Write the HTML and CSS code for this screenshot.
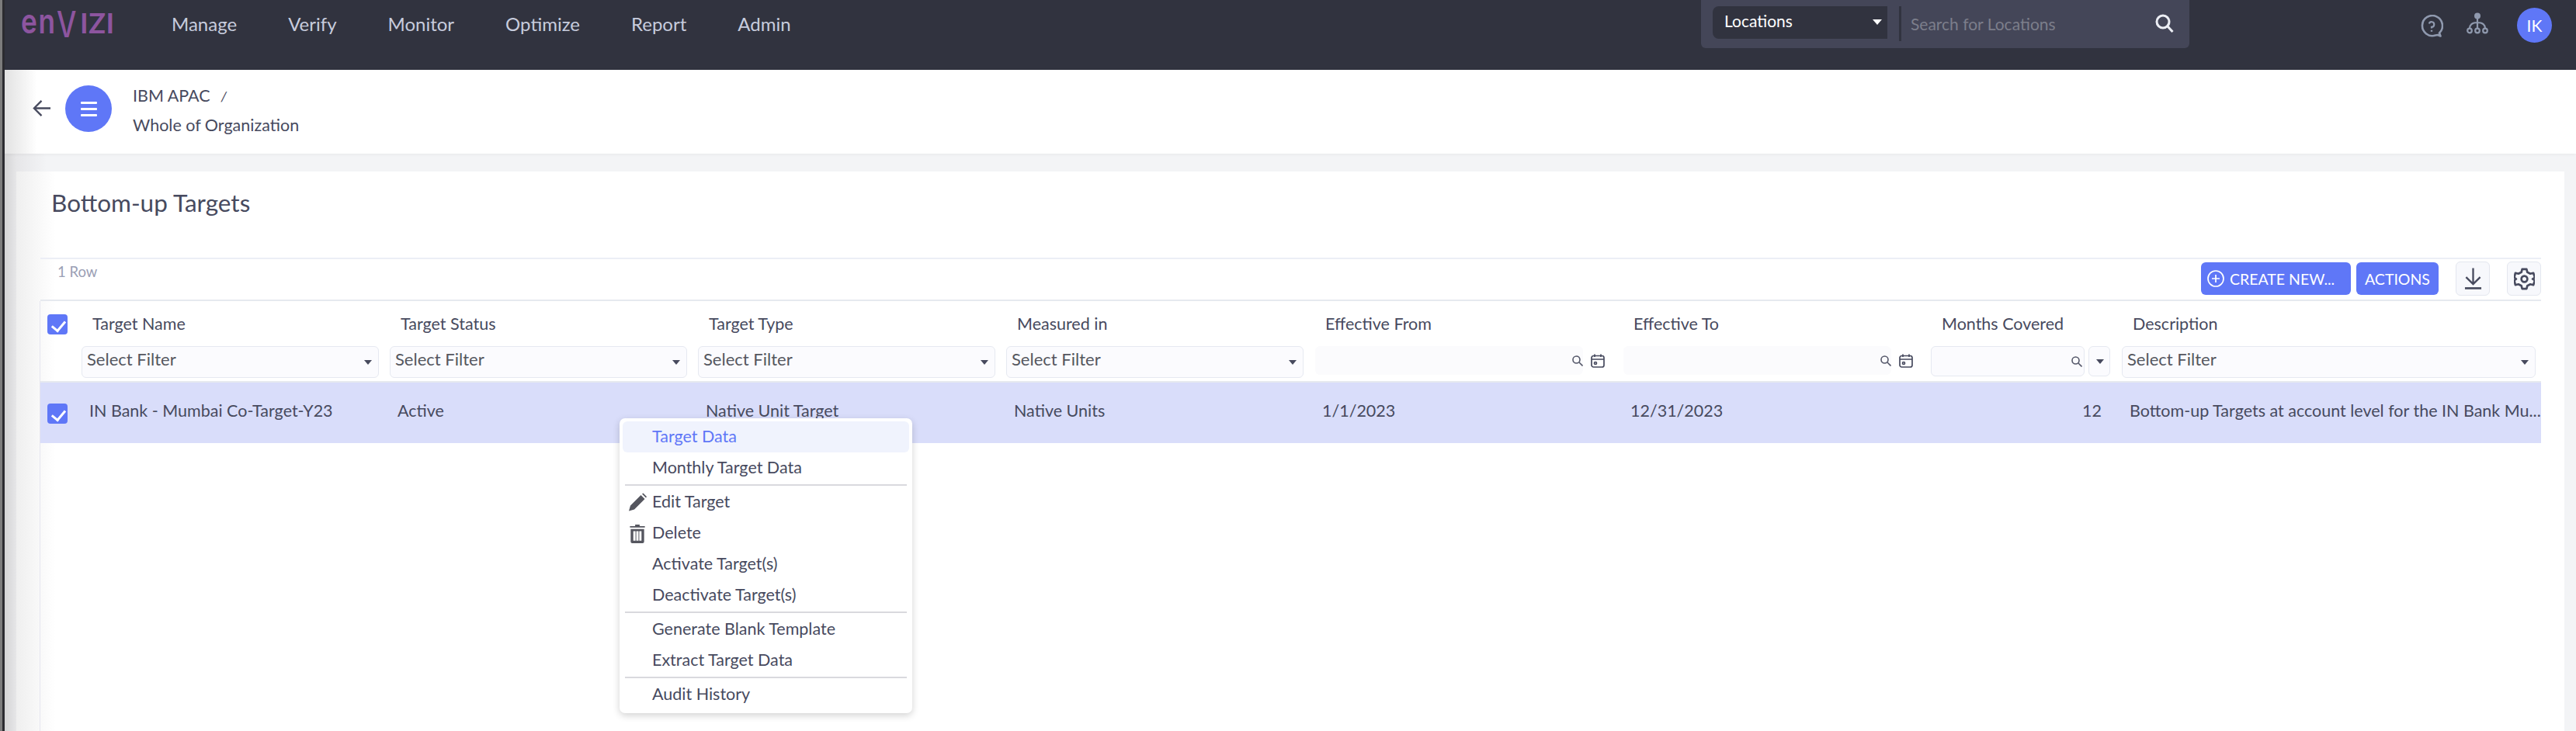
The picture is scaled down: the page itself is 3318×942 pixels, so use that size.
FILE: index.html
```html
<!DOCTYPE html>
<html lang="en">
<head>
    <meta charset="UTF-8">
    <title>Bottom-up Targets</title>
    <link rel="stylesheet" href="styles.css">
</head>
<body>
    <header class="topbar">
        <div class="logo"><span class="logo-en">en</span><span class="logo-v">V</span><span class="logo-izi">IZI</span></div>
        <nav class="main-nav">
            <a>Manage</a>
            <a>Verify</a>
            <a>Monitor</a>
            <a>Optimize</a>
            <a>Report</a>
            <a>Admin</a>
        </nav>
        <div class="search-box">
            <div class="search-select">Locations<span class="caret caret-white"></span></div>
            <div class="search-sep"></div>
            <div class="search-placeholder">Search for Locations</div>
            <svg class="search-icon" viewBox="0 0 24 24" fill="none" stroke="#eceef4" stroke-width="3">
                <circle cx="10" cy="10" r="8"/>
                <path d="M15.5 15.5 L22.5 23"/>
            </svg>
        </div>
        <div class="top-icons">
            <svg class="help-icon" viewBox="0 0 30 30" fill="none" stroke="#8f99ae" stroke-width="2.6">
                <path d="M25 23.500 A13 13 0 1 0 20 26.500 L23 26 L26.500 27.500 Z" stroke-linejoin="round"/>
                <path d="M11.800 11.500 A3.300 3.300 0 1 1 15 15.800 V17.500" stroke-width="2.200"/>
                <path d="M15 19.800 V21.800" stroke-width="2.400"/>
            </svg>
            <svg class="org-icon" viewBox="0 0 28 28" fill="none" stroke="#8f99ae" stroke-width="2.200">
                <circle cx="14" cy="4.500" r="4" fill="#8f99ae" stroke="none"/>
                <path d="M14 8 V21 M14 13 C7 13 4 16 4 20.500 M14 13 C21 13 24 16 24 20.500"/>
                <circle cx="4" cy="23.500" r="2.800"/>
                <circle cx="14" cy="23.500" r="2.800"/>
                <circle cx="24" cy="23.500" r="2.800"/>
            </svg>
            <div class="avatar">IK</div>
        </div>
    </header>

    <div class="page">
        <div class="breadcrumb-bar">
            <svg class="back-arrow" viewBox="0 0 24 24" fill="none" stroke="#474a5e" stroke-width="2.4">
                <path d="M12 2 L2 12 L12 22 M2 12 H24"/>
            </svg>
            <div class="round-btn"><span></span><span></span><span></span></div>
            <div class="crumbs">
                <div class="crumb-top">IBM APAC<i>/</i></div>
                <div class="crumb-bottom">Whole of Organization</div>
            </div>
        </div>

        <section class="card">
            <h1 class="title">Bottom-up Targets</h1>

            <div class="toolbar">
                <div class="row-count">1 Row</div>
                <div class="toolbar-actions">
                    <button class="btn btn-create">
                        <svg viewBox="0 0 22 22" fill="none" stroke="#fff" stroke-width="1.700">
                            <circle cx="11" cy="11" r="10"/>
                            <path d="M11 6 V16 M6 11 H16"/>
                        </svg>
                        CREATE NEW...
                    </button>
                    <button class="btn btn-actions">ACTIONS</button>
                    <button class="icon-btn btn-download">
                        <svg viewBox="0 0 24 30" fill="none" stroke="#474a5e" stroke-width="2.400">
                            <path d="M12 1 V22 M2.500 13 L12 22.500 L21.500 13"/>
                            <path d="M1 28 H23" stroke-width="2.800"/>
                        </svg>
                    </button>
                    <button class="icon-btn btn-gear">
                        <svg viewBox="0 0 28 30" fill="none" stroke="#474a5e" stroke-width="2.800" stroke-linejoin="round">
                            <path d="M11 2 H17 L18 6 L22 8 L26 7 L28 13 L25 15 L28 17 L26 23 L22 22 L18 24 L17 28 H11 L10 24 L6 22 L2 23 L0.500 17 L3 15 L0.500 13 L2 7 L6 8 L10 6 Z"/>
                            <circle cx="14" cy="15" r="4"/>
                        </svg>
                    </button>
                </div>
            </div>

            <div class="grid-table">
                <div class="tr tr-head">
                    <div class="cell-check"><span class="checkbox"></span></div>
                    <div class="th">Target Name</div>
                    <div class="th">Target Status</div>
                    <div class="th">Target Type</div>
                    <div class="th">Measured in</div>
                    <div class="th">Effective From</div>
                    <div class="th">Effective To</div>
                    <div class="th">Months Covered</div>
                    <div class="th">Description</div>
                </div>
                <div class="tr tr-filter">
                    <div></div>
                    <div class="flt"><div class="select-filter">Select Filter<span class="caret"></span></div></div>
                    <div class="flt"><div class="select-filter">Select Filter<span class="caret"></span></div></div>
                    <div class="flt"><div class="select-filter">Select Filter<span class="caret"></span></div></div>
                    <div class="flt"><div class="select-filter">Select Filter<span class="caret"></span></div></div>
                    <div class="flt flt-date">
                        <div class="date-input">
                            <svg class="mini-search" viewBox="0 0 14 14" fill="none" stroke="#55586a" stroke-width="1.600"><circle cx="5.500" cy="5.500" r="4.500"/><path d="M9 9 L13.500 13.500"/></svg>
                        </div>
                        <svg class="calendar" viewBox="0 0 18 18" fill="none" stroke="#474a5e" stroke-width="1.700"><rect x="1" y="2.500" width="16" height="14.500" rx="2.500"/><path d="M1 7 H17 M5 0.500 V4 M13 0.500 V4"/><circle cx="6" cy="12" r="1.500"/></svg>
                    </div>
                    <div class="flt flt-date">
                        <div class="date-input">
                            <svg class="mini-search" viewBox="0 0 14 14" fill="none" stroke="#55586a" stroke-width="1.600"><circle cx="5.500" cy="5.500" r="4.500"/><path d="M9 9 L13.500 13.500"/></svg>
                        </div>
                        <svg class="calendar" viewBox="0 0 18 18" fill="none" stroke="#474a5e" stroke-width="1.700"><rect x="1" y="2.500" width="16" height="14.500" rx="2.500"/><path d="M1 7 H17 M5 0.500 V4 M13 0.500 V4"/><circle cx="6" cy="12" r="1.500"/></svg>
                    </div>
                    <div class="flt flt-num">
                        <div class="num-input">
                            <svg class="mini-search" viewBox="0 0 14 14" fill="none" stroke="#55586a" stroke-width="1.600"><circle cx="5.500" cy="5.500" r="4.500"/><path d="M9 9 L13.500 13.500"/></svg>
                        </div>
                        <div class="num-op"><span class="caret"></span></div>
                    </div>
                    <div class="flt"><div class="select-filter">Select Filter<span class="caret"></span></div></div>
                </div>
                <div class="tr tr-row">
                    <div class="cell-check"><span class="checkbox"></span></div>
                    <div class="td">IN Bank - Mumbai Co-Target-Y23</div>
                    <div class="td">Active</div>
                    <div class="td">Native Unit Target</div>
                    <div class="td">Native Units</div>
                    <div class="td">1/1/2023</div>
                    <div class="td">12/31/2023</div>
                    <div class="td td-num">12</div>
                    <div class="td td-desc">Bottom-up Targets at account level for the IN Bank Mu...</div>

                    <ul class="context-menu">
                        <li class="active">Target Data</li>
                        <li>Monthly Target Data</li>
                        <li class="divider"></li>
                        <li>
                            <svg class="menu-icon" viewBox="0 0 24 24" fill="#55565f"><path d="M1 23 L3 16 L16.500 2.500 L21.500 7.500 L8 21 Z M18 1 L19.500 0 L24 4.500 L23 6 Z"/></svg>
                            Edit Target
                        </li>
                        <li>
                            <svg class="menu-icon" viewBox="0 0 24 26"><path fill="#55565f" d="M2 3 H9 V1 H15 V3 H22 V5 H2 Z M3 7 H21 V24 Q21 26 19 26 H5 Q3 26 3 24 Z"/><path fill="#fff" d="M6.500 10 H9.500 V22.500 H6.500 Z M10.500 10 H13.500 V22.500 H10.500 Z M14.500 10 H17.500 V22.500 H14.500 Z"/></svg>
                            Delete
                        </li>
                        <li>Activate Target(s)</li>
                        <li>Deactivate Target(s)</li>
                        <li class="divider"></li>
                        <li>Generate Blank Template</li>
                        <li>Extract Target Data</li>
                        <li class="divider"></li>
                        <li>Audit History</li>
                    </ul>
                </div>
            </div>
        </section>
    </div>
</body>
</html>
```

FILE: styles.css
```css
* {
    box-sizing: border-box;
}
html, body {
    height: 100%;
    overflow: hidden;
}
body {
    margin: 0;
    padding-left: 6px;
    background: linear-gradient(90deg, #d4d4d5 6px, #e6e6e8 21px, #f3f4f6 60px);
    font-family: Lato, "Noto Sans", sans-serif;
    font-size: 21.5px;
    color: #474a5e;
    position: relative;
}
body::before {
    content: "";
    position: absolute;
    left: 0;
    top: 0;
    bottom: 0;
    width: 6px;
    background: linear-gradient(90deg, #7c7c7c 50%, #2b2b30 50%);
}

/* top bar */
.topbar {
    height: 90px;
    background: #31333f;
    display: flex;
    align-items: flex-start;
    padding-left: 21px;
}
.logo {
    width: 194px;
    display: flex;
    align-items: flex-start;
    font-family: Inter, sans-serif;
    color: #8d559f;
}
.logo-en {
    display: inline-block;
    width: 46px;
    margin-top: 5px;
    font-size: 44px;
    font-weight: 600;
    line-height: 44px;
    letter-spacing: 2px;
    white-space: nowrap;
    transform: scaleX(0.8);
    transform-origin: 0 50%;
}
.logo-v {
    display: inline-block;
    width: 28px;
    margin-top: 8px;
    font-size: 46px;
    font-weight: 500;
    line-height: 46px;
    transform: scaleX(0.78);
    transform-origin: 0 50%;
}
.logo-izi {
    display: inline-block;
    margin-top: 16px;
    margin-left: 2px;
    font-family: Lato, sans-serif;
    font-size: 36px;
    font-weight: 700;
    line-height: 26px;
    letter-spacing: 0.5px;
}
.main-nav {
    display: flex;
    gap: 66px;
    margin-top: 16px;
    font-size: 24px;
    line-height: 30px;
    color: #c7ccdd;
}
.search-box {
    position: absolute;
    left: 2191px;
    top: 0;
    width: 629px;
    height: 62px;
    background: #444658;
    border-radius: 0 0 6px 6px;
    display: flex;
    align-items: flex-start;
    padding: 8px 20px 0 15px;
}
.search-select {
    width: 225px;
    height: 42px;
    background: #31333f;
    border-radius: 8px 0 0 8px;
    color: #fff;
    font-size: 21px;
    line-height: 38px;
    padding-left: 15px;
    position: relative;
}
.search-sep {
    width: 3px;
    height: 45px;
    margin-left: 15px;
    background: #31333f;
}
.search-placeholder {
    margin-left: 12px;
    margin-top: 11px;
    font-size: 21px;
    line-height: 24px;
    color: #7c7e8b;
}
.search-icon {
    width: 24px;
    height: 24px;
    margin-left: auto;
    margin-top: 10px;
}
.top-icons {
    position: absolute;
    left: 3117px;
    top: 10px;
    display: flex;
    align-items: flex-start;
}
.help-icon {
    width: 30px;
    height: 30px;
    margin-top: 9px;
}
.org-icon {
    width: 28px;
    height: 28px;
    margin-top: 6px;
    margin-left: 30px;
}
.avatar {
    width: 45px;
    height: 45px;
    margin-left: 37px;
    border-radius: 50%;
    background: #5f77f7;
    color: #fff;
    font-size: 21px;
    line-height: 45px;
    text-align: center;
}
.caret {
    position: absolute;
    right: 8px;
    top: 50%;
    margin-top: -3px;
    border-left: 5px solid transparent;
    border-right: 5px solid transparent;
    border-top: 6px solid #474a5e;
}
.caret-white {
    right: 7px;
    border-left-width: 6px;
    border-right-width: 6px;
    border-top: 7px solid #fff;
    margin-top: -4px;
}

/* breadcrumb */
.breadcrumb-bar {
    height: 108px;
    background: linear-gradient(90deg, #e2e2e2, #fff 42px);
    display: flex;
    align-items: flex-start;
    box-shadow: 0 1px 4px rgba(0, 0, 0, 0.05);
}
.back-arrow {
    width: 23px;
    height: 23px;
    margin: 38px 0 0 36px;
}
.round-btn {
    width: 60px;
    height: 60px;
    margin: 20px 0 0 19px;
    border-radius: 50%;
    background: #5f77f7;
    display: flex;
    flex-direction: column;
    align-items: center;
    justify-content: center;
    gap: 5px;
}
.round-btn span {
    width: 21px;
    height: 3px;
    background: #fff;
    border-radius: 1px;
}
.crumbs {
    margin: 20px 0 0 27px;
}
.crumb-top {
    line-height: 26px;
}
.crumb-top i {
    margin-left: 14px;
    font-size: 18px;
}
.crumb-bottom {
    margin-top: 11px;
    line-height: 26px;
}

/* card */
.card {
    margin: 23px 15px 0 15px;
    height: 721px;
    background: linear-gradient(90deg, #efefef, #fff 50px);
    padding: 0 30px 0 31px;
}
.title {
    margin: 0;
    padding: 25px 0 0 14px;
    height: 111px;
    font-size: 31.500px;
    line-height: 30px;
    font-weight: 400;
    color: #474a5e;
}
.toolbar {
    height: 56px;
    border-top: 2px solid #eceef6;
    border-bottom: 2px solid #e6e9ef;
    display: flex;
    justify-content: space-between;
    position: relative;
}
.row-count {
    margin: 5px 0 0 22px;
    font-size: 18.500px;
    line-height: 22px;
    color: #9aa0b5;
}
.toolbar-actions {
    display: flex;
    align-items: flex-start;
    padding-top: 4px;
}
.btn {
    height: 42px;
    background: #5f77f7;
    border: 0;
    border-radius: 6px;
    color: #fff;
    font-family: inherit;
    font-size: 19.500px;
    padding: 0;
    display: flex;
    align-items: center;
    justify-content: center;
}
.btn-create {
    width: 193px;
    gap: 7px;
    justify-content: flex-start;
    padding-left: 8px;
}
.btn-create svg {
    width: 22px;
    height: 22px;
}
.btn-actions {
    width: 106px;
    margin-left: 7px;
}
.icon-btn {
    width: 44px;
    height: 44px;
    margin-top: -1px;
    margin-left: 22px;
    background: #f7f8fc;
    border: 1px solid #e4e7ef;
    border-radius: 6px;
    padding: 0;
    display: flex;
    align-items: center;
    justify-content: center;
}
.btn-gear svg {
    width: 27px;
    height: 29px;
}
.btn-download svg {
    width: 23px;
    height: 30px;
}

/* table */
.grid-table {
    height: 554px;
    box-shadow: -1px 0 0 #e6e6ef;
    position: relative;
}
.tr {
    display: grid;
    grid-template-columns: 46px repeat(6, 397px) 246px 547px;
    position: relative;
}
.tr-head {
    height: 58px;
    padding-top: 17px;
}
.cell-check {
    padding-left: 9px;
}
.checkbox {
    display: block;
    width: 26px;
    height: 26px;
    background: #5f77f7;
    border-radius: 4px;
    position: relative;
}
.checkbox::after {
    content: "";
    position: absolute;
    left: 9px;
    top: 5px;
    width: 8px;
    height: 14px;
    border-right: 3px solid #fff;
    border-bottom: 3px solid #fff;
    transform: rotate(40deg);
}
.th {
    padding-left: 21px;
    line-height: 24px;
    white-space: nowrap;
}
.tr-filter {
    height: 47px;
    border-bottom: 2px solid #e6e9ef;
}
.flt {
    padding: 0 7px;
}
.select-filter {
    position: relative;
    height: 41px;
    background: #fbfbfe;
    border: 1.500px solid #e6e9f1;
    border-radius: 6px;
    padding-left: 6px;
    font-size: 22px;
    line-height: 31px;
    color: #55575f;
    white-space: nowrap;
}
.flt-date {
    display: flex;
    padding: 0 0 0 8px;
}
.date-input {
    width: 345px;
    height: 37px;
    background: #fbfbfd;
    border-radius: 6px;
    display: flex;
    justify-content: flex-end;
    align-items: center;
}
.mini-search {
    width: 14px;
    height: 14px;
}
.calendar {
    width: 18px;
    height: 18px;
    margin: 10px 0 0 10px;
}
.flt-num {
    display: flex;
    gap: 5px;
}
.num-input {
    width: 198px;
    height: 39px;
    background: #fbfbfe;
    border: 1.500px solid #e6e9f1;
    border-radius: 6px;
    display: flex;
    justify-content: flex-end;
    align-items: center;
    padding-right: 2px;
}
.num-op {
    position: relative;
    width: 28px;
    height: 39px;
    background: #fbfbfe;
    border: 1.500px solid #e6e9f1;
    border-radius: 6px;
}
.num-op .caret {
    right: 7px;
}
.tr-row {
    height: 78px;
    background: #d9ddfa;
    align-items: center;
}
.tr-row .cell-check {
    padding-top: 1px;
}
.td {
    padding: 0 0 6px 17px;
    white-space: nowrap;
    color: #474a5e;
}
.td-num {
    text-align: right;
    padding-right: 19px;
}

/* menu over the row */
.context-menu {
    position: absolute;
    left: 746px;
    top: 46px;
    width: 377px;
    height: 380px;
    margin: 0;
    padding: 4px;
    list-style: none;
    background: #fff;
    border-radius: 7px;
    box-shadow: 0 3px 10px rgba(0, 0, 0, 0.18);
    z-index: 5;
}
.context-menu li {
    position: relative;
    height: 40px;
    line-height: 39px;
    padding-left: 38px;
    color: #474a5e;
    border-radius: 6px;
    white-space: nowrap;
}
.context-menu li.active {
    background: #f0f3fd;
    color: #5f77f7;
}
.context-menu li.divider {
    height: 2px;
    margin: 1px 3px;
    padding: 0;
    border-radius: 0;
    background: #d9d9de;
}
.menu-icon {
    position: absolute;
    left: 7px;
    top: 8px;
    width: 24px;
    height: 25px;
}
```
